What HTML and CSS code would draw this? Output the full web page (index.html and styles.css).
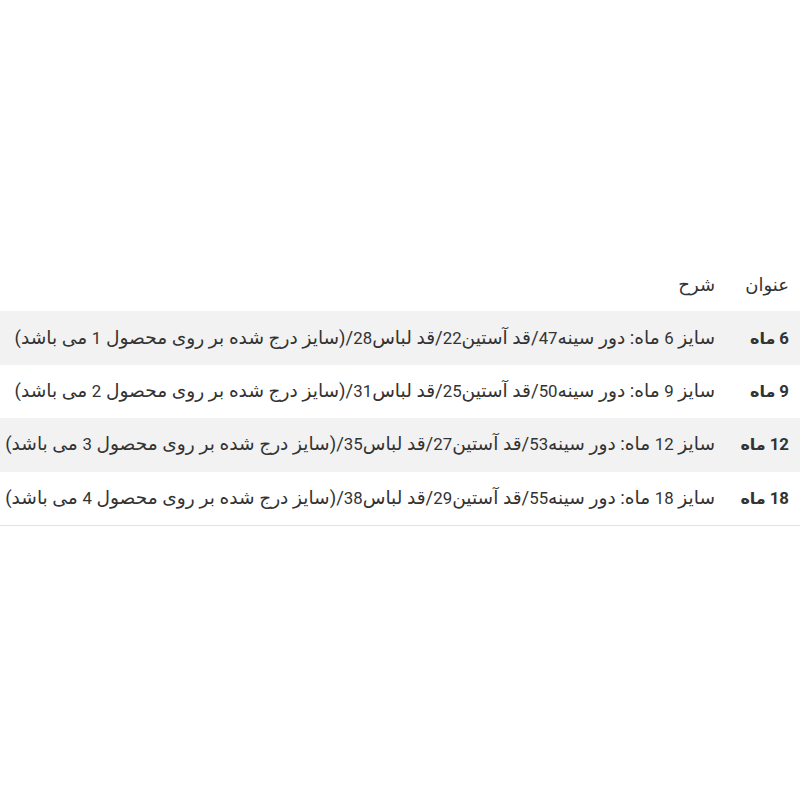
FILE: index.html
```html
<!DOCTYPE html>
<html lang="fa" dir="rtl">
<head>
<meta charset="utf-8">
<title>جدول سایز</title>
<link rel="stylesheet" href="styles.css">
</head>
<body>
<div class="page">
  <table class="sizes">
    <thead>
      <tr><th class="col-title">عنوان</th><th class="col-desc">شرح</th></tr>
    </thead>
    <tbody>
      <tr class="odd"><td class="col-title"><span class="num">6</span> ماه</td><td class="col-desc">سایز <span class="num">6</span> ماه: دور سینه<span class="num">47</span>/قد آستین<span class="num">22</span>/قد لباس<span class="num">28</span>/(سایز درج شده بر روی محصول <span class="num">1</span> می باشد)</td></tr>
      <tr><td class="col-title"><span class="num">9</span> ماه</td><td class="col-desc">سایز <span class="num">9</span> ماه: دور سینه<span class="num">50</span>/قد آستین<span class="num">25</span>/قد لباس<span class="num">31</span>/(سایز درج شده بر روی محصول <span class="num">2</span> می باشد)</td></tr>
      <tr class="odd"><td class="col-title"><span class="num">12</span> ماه</td><td class="col-desc">سایز <span class="num">12</span> ماه: دور سینه<span class="num">53</span>/قد آستین<span class="num">27</span>/قد لباس<span class="num">35</span>/(سایز درج شده بر روی محصول <span class="num">3</span> می باشد)</td></tr>
      <tr><td class="col-title"><span class="num">18</span> ماه</td><td class="col-desc">سایز <span class="num">18</span> ماه: دور سینه<span class="num">55</span>/قد آستین<span class="num">29</span>/قد لباس<span class="num">38</span>/(سایز درج شده بر روی محصول <span class="num">4</span> می باشد)</td></tr>
    </tbody>
  </table>
</div>
</body>
</html>
```
FILE: styles.css
```css
html, body {
  margin: 0;
  padding: 0;
  background: #fff;
}
body {
  font-family: Roboto, "DejaVu Sans", sans-serif;
  font-size: 18.6px;
  color: #333;
}
.page {
  padding-top: 258px;
}
.sizes {
  width: 100%;
  border-collapse: collapse;
  border-bottom: 1px solid #e2e2e2;
}
.sizes th,
.sizes td {
  height: 53.4px;
  padding: 0 11px;
  text-align: right;
  vertical-align: middle;
  white-space: nowrap;
  line-height: 23px;
}
.sizes th {
  font-weight: normal;
  font-size: 18px;
  color: #333;
}
.sizes td.col-title {
  font-weight: bold;
  font-size: 16px;
  width: 52px;
}
.sizes td.col-desc {
  padding-left: 2px;
}
.num {
  font-size: 16.8px;
}
.sizes tr.odd {
  background: #f2f2f2;
}
```
